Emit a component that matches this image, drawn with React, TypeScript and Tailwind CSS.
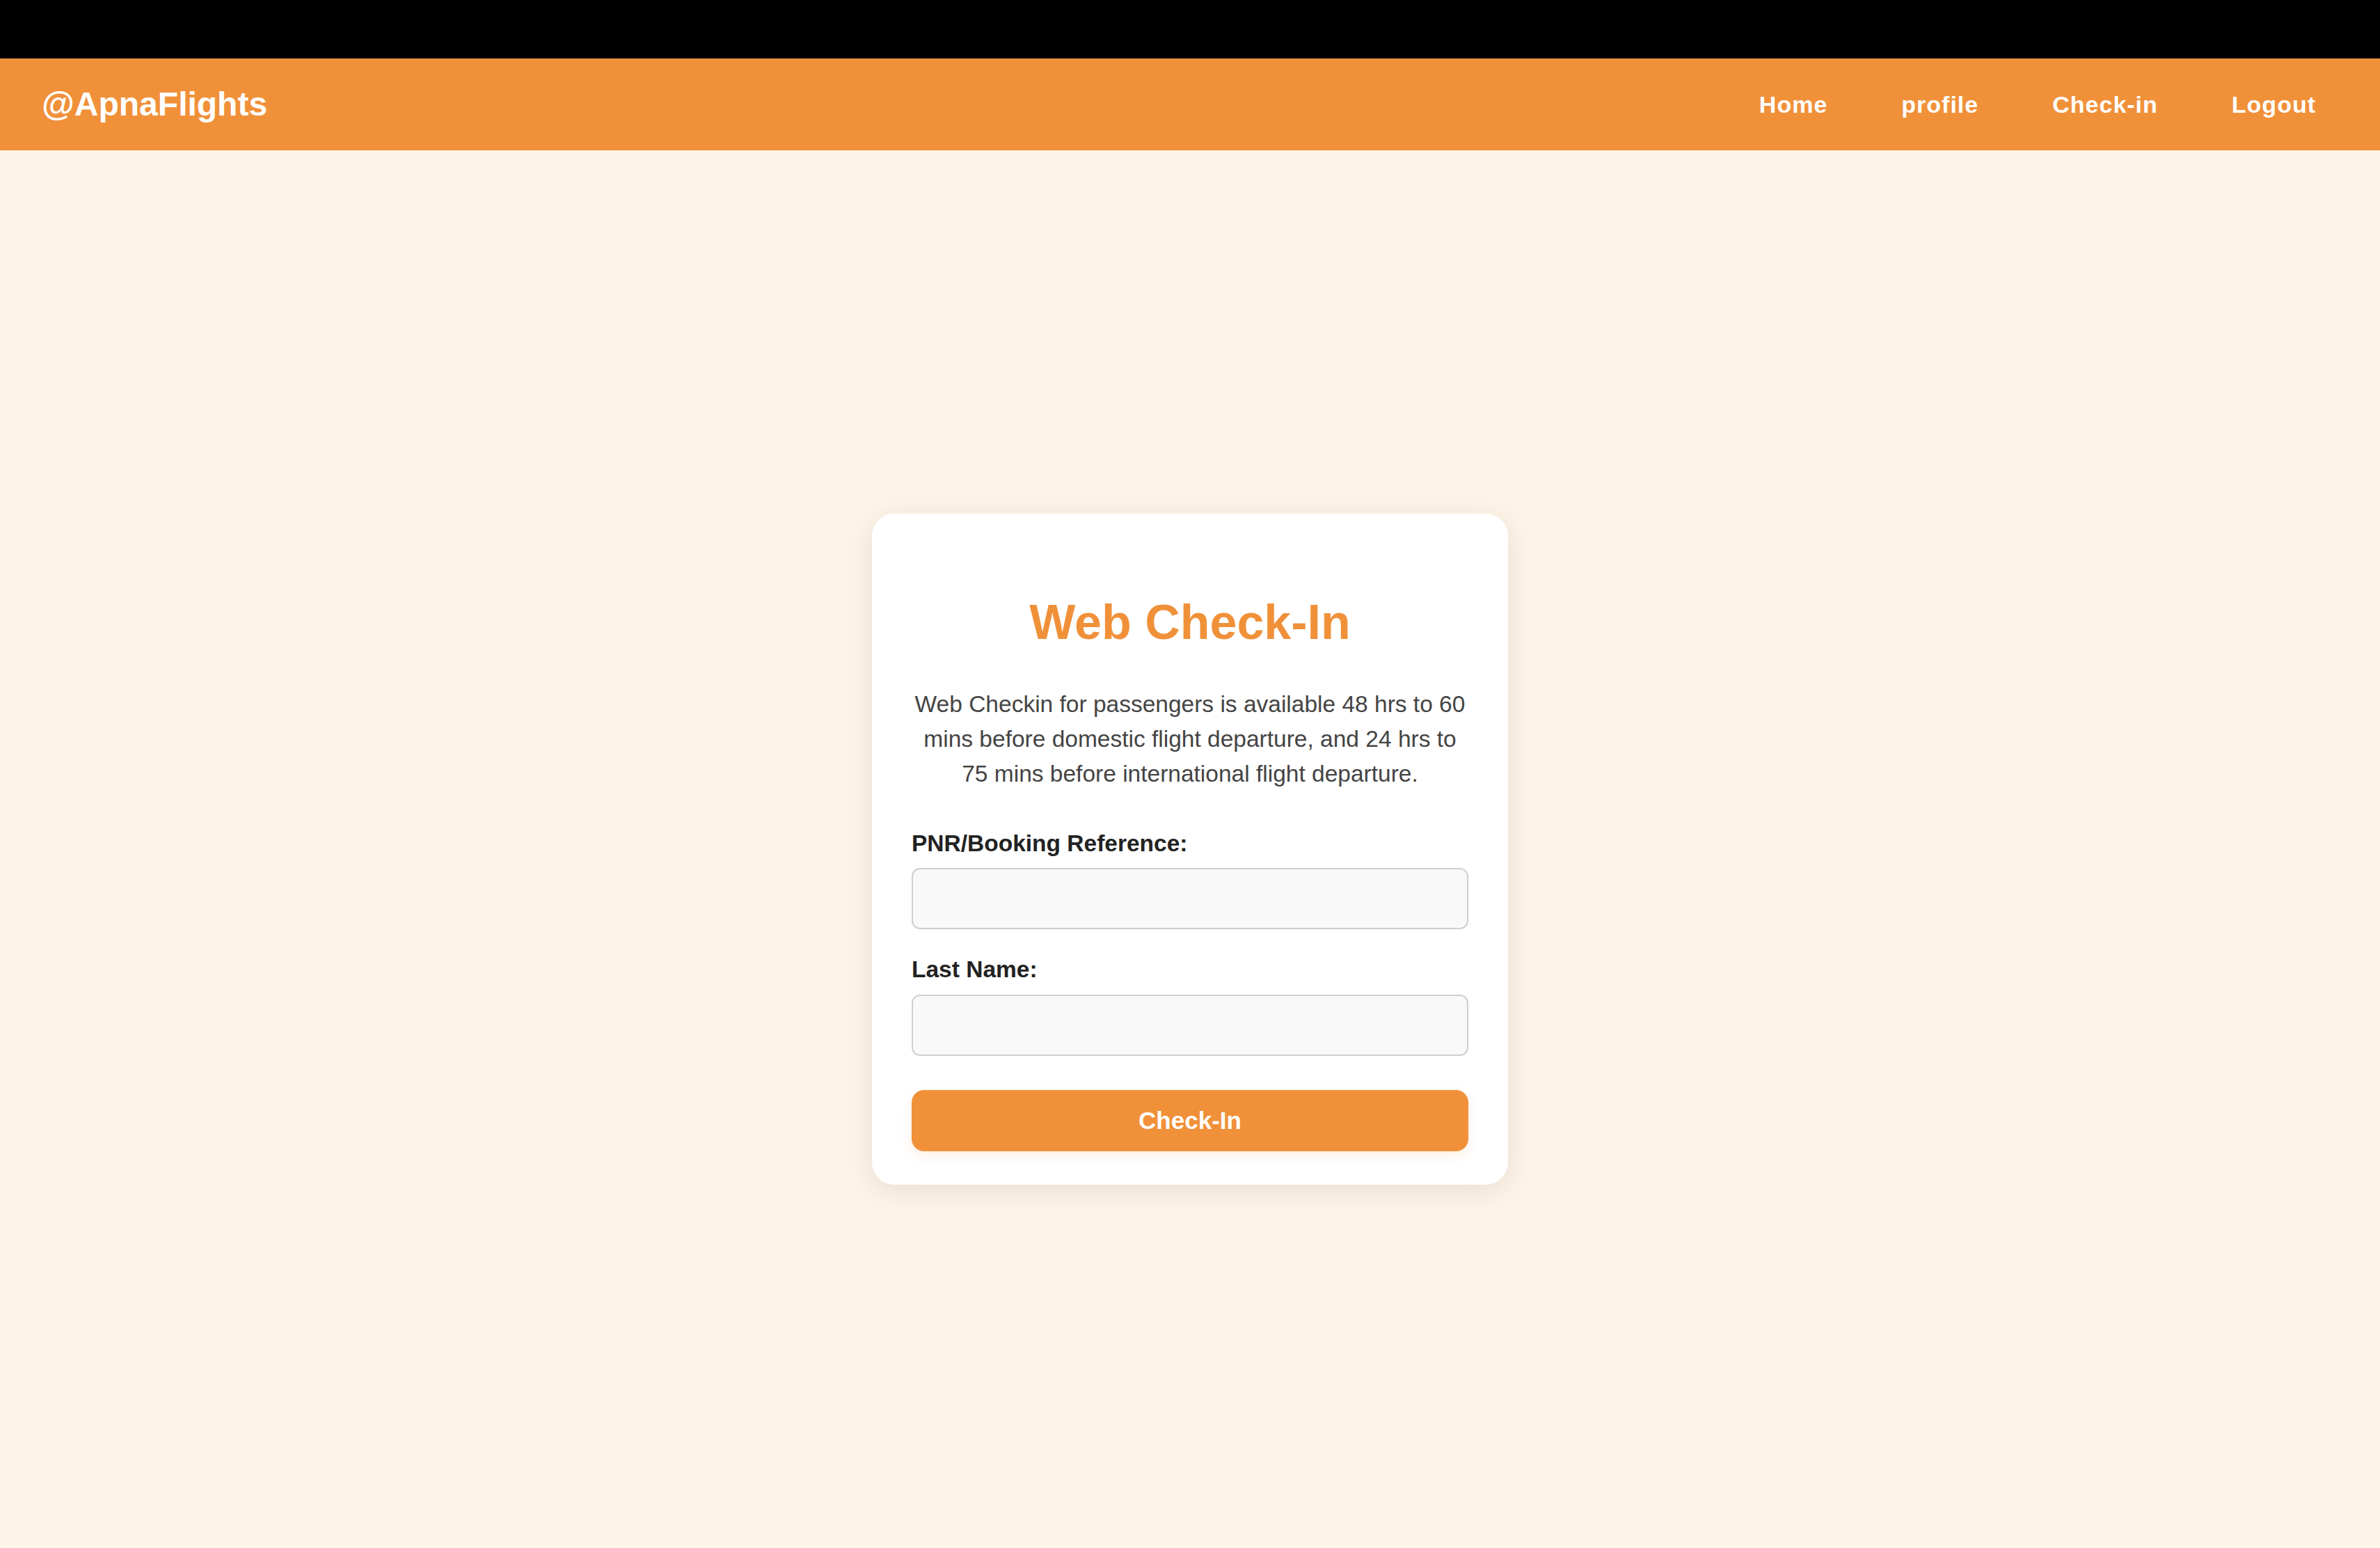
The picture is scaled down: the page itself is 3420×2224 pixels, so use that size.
import { useState } from "react"

const links = ["Home", "profile", "Check-in", "Logout"]

function Navbar() {
  return (
    <nav className="flex h-[132px] items-center justify-between bg-[#f0913a] pl-[60px] pr-[92px]">
      <span className="text-[48px] font-bold text-white">@ApnaFlights</span>
      <div className="flex items-center gap-[106px]">
        {links.map((link) => (
          <a key={link} href="#" className="text-[34px] font-bold tracking-[1px] text-white">
            {link}
          </a>
        ))}
      </div>
    </nav>
  )
}

function CheckInCard() {
  const [pnr, setPnr] = useState("")
  const [lastName, setLastName] = useState("")

  return (
    <div className="w-[914px] rounded-[32px] bg-white px-[57px] pt-[57px] pb-[48px] shadow-[0_8px_40px_rgba(0,0,0,0.09)]">
      <h2 className="mt-[59px] mb-[53px] text-center text-[70px] leading-[80px] font-bold text-[#f0913a]">
        Web Check-In
      </h2>
      <p className="mb-[56px] text-center text-[33.5px] leading-[50px] text-[#444]">
        Web Checkin for passengers is available 48 hrs to 60 mins before domestic flight departure, and 24 hrs to
        75 mins before international flight departure.
      </p>

      <form onSubmit={(e) => e.preventDefault()}>
        <label className="mb-[16px] block text-[33.5px] leading-[38px] font-bold text-[#222]">
          PNR/Booking Reference:
        </label>
        <input
          value={pnr}
          onChange={(e) => setPnr(e.target.value)}
          className="mb-[39px] block h-[88px] w-full rounded-[12px] border-2 border-[#cfcfcf] bg-[#f9f9f9] px-[24px] text-[33px] outline-none"
        />

        <label className="mb-[17px] block text-[33.5px] leading-[38px] font-bold text-[#222]">Last Name:</label>
        <input
          value={lastName}
          onChange={(e) => setLastName(e.target.value)}
          className="mb-[49px] block h-[88px] w-full rounded-[12px] border-2 border-[#cfcfcf] bg-[#f9f9f9] px-[24px] text-[33px] outline-none"
        />

        <button
          type="submit"
          className="block h-[88px] w-full rounded-[18px] bg-[#f0913a] text-[35px] font-bold text-white shadow-[0_6px_16px_rgba(240,145,58,0.15)]"
        >
          Check-In
        </button>
      </form>
    </div>
  )
}

export default function App() {
  return (
    <div
      className="flex min-h-screen flex-col bg-[#fdf4e7]"
      style={{ fontFamily: '"Liberation Sans", Arial, sans-serif' }}
    >
      <div className="h-[84px] bg-black" />
      <Navbar />
      <main className="flex flex-1 items-center justify-center">
        <CheckInCard />
      </main>
    </div>
  )
}
